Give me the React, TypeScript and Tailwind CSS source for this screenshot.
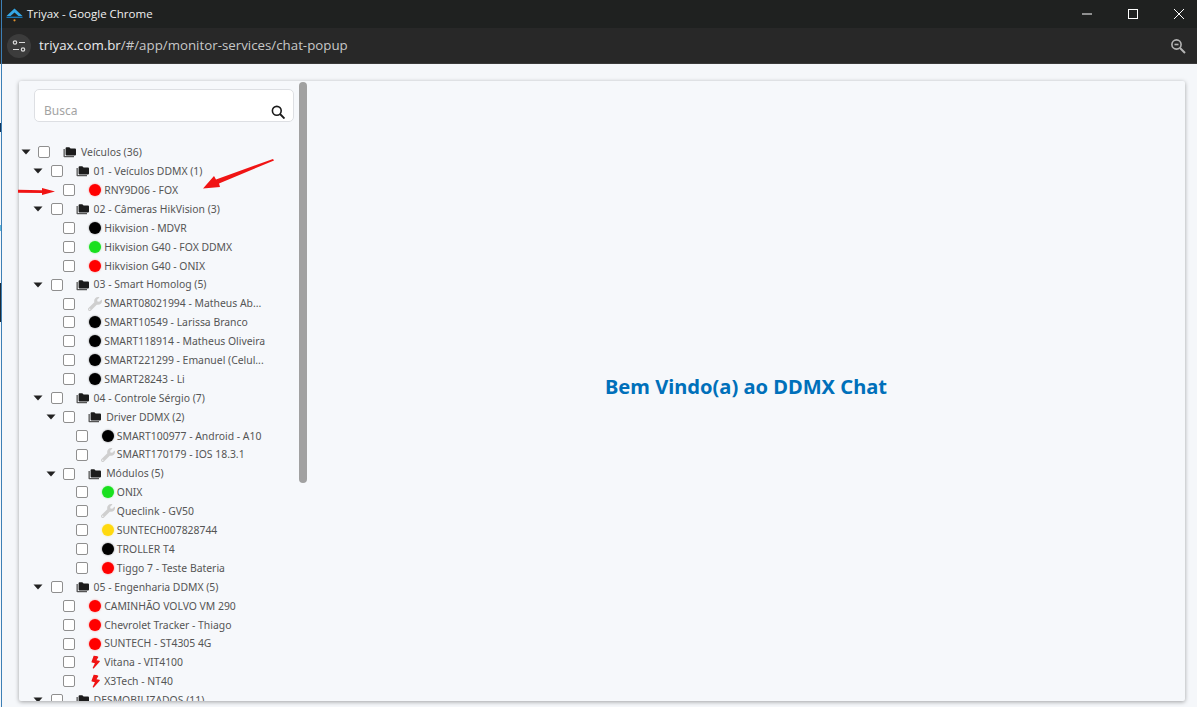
import React from "react";
import { FaBolt, FaWrench } from "react-icons/fa";

type Row = { l: 0 | 1 | 2 | 3; t: string; k: "folder" | "red" | "black" | "green" | "yellow" | "wrench" | "bolt" };

const rows: Row[] = [
  { l: 0, t: "Veículos (36)", k: "folder" },
  { l: 1, t: "01 - Veículos DDMX (1)", k: "folder" },
  { l: 2, t: "RNY9D06 - FOX", k: "red" },
  { l: 1, t: "02 - Câmeras HikVision (3)", k: "folder" },
  { l: 2, t: "Hikvision - MDVR", k: "black" },
  { l: 2, t: "Hikvision G40 - FOX DDMX", k: "green" },
  { l: 2, t: "Hikvision G40 - ONIX", k: "red" },
  { l: 1, t: "03 - Smart Homolog (5)", k: "folder" },
  { l: 2, t: "SMART08021994 - Matheus Ab...", k: "wrench" },
  { l: 2, t: "SMART10549 - Larissa Branco", k: "black" },
  { l: 2, t: "SMART118914 - Matheus Oliveira", k: "black" },
  { l: 2, t: "SMART221299 - Emanuel (Celul...", k: "black" },
  { l: 2, t: "SMART28243 - Li", k: "black" },
  { l: 1, t: "04 - Controle Sérgio (7)", k: "folder" },
  { l: 2, t: "Driver DDMX (2)", k: "folder" },
  { l: 3, t: "SMART100977 - Android - A10", k: "black" },
  { l: 3, t: "SMART170179 - IOS 18.3.1", k: "wrench" },
  { l: 2, t: "Módulos (5)", k: "folder" },
  { l: 3, t: "ONIX", k: "green" },
  { l: 3, t: "Queclink - GV50", k: "wrench" },
  { l: 3, t: "SUNTECH007828744", k: "yellow" },
  { l: 3, t: "TROLLER T4", k: "black" },
  { l: 3, t: "Tiggo 7 - Teste Bateria", k: "red" },
  { l: 1, t: "05 - Engenharia DDMX (5)", k: "folder" },
  { l: 2, t: "CAMINHÃO VOLVO VM 290", k: "red" },
  { l: 2, t: "Chevrolet Tracker - Thiago", k: "red" },
  { l: 2, t: "SUNTECH - ST4305 4G", k: "red" },
  { l: 2, t: "Vitana - VIT4100", k: "bolt" },
  { l: 2, t: "X3Tech - NT40", k: "bolt" },
  { l: 1, t: "DESMOBILIZADOS (11)", k: "folder" },
];

const indent = ["pl-0", "pl-[12.6px]", "pl-[25.2px]", "pl-[37.8px]"];

function Folder() {
  return (
    <svg width="14" height="12" viewBox="0 0 14 12" className="shrink-0">
      <path d="M0.5 3v7.4c0 .5.4.8.8.8H11v-1.2H1.8V3z" fill="#555" />
      <path d="M2.6 2.2c0-.5.4-.9.9-.9h2.8l1.3 1.3h4.5c.5 0 .9.4.9.9v5c0 .5-.4.9-.9.9H3.5c-.5 0-.9-.4-.9-.9z" fill="#1c1c1c" />
    </svg>
  );
}

function Icon({ k }: { k: Row["k"] }) {
  if (k === "folder") return <Folder />;
  if (k === "wrench")
    return <FaWrench className="w-[14px] h-[14px] shrink-0 text-[#cfcfcf]" />;
  if (k === "bolt")
    return (
      <span className="w-[14px] flex justify-center shrink-0">
        <FaBolt className="w-[11px] h-[13px] text-[#f01414] rotate-12" />
      </span>
    );
  const c = {
    red: "bg-[#ff0000] shadow-[#ff0000]/30",
    black: "bg-[#000000] shadow-[#000000]/30",
    green: "bg-[#19e01e] shadow-[#19e01e]/30",
    yellow: "bg-[#ffd90f] shadow-[#ffd90f]/30",
  }[k];
  return <span className={`w-3 h-3 mx-px rounded-full shrink-0 shadow-[0_0_1.5px_0.5px] ${c}`} />;
}

function TreeRow({ r }: { r: Row }) {
  const isFolder = r.k === "folder";
  return (
    <div className={`flex items-center h-[18.9px] whitespace-nowrap ${indent[r.l]}`}>
      <span className="w-[13px] mr-[6px] shrink-0 flex justify-center">
        {isFolder && (
          <svg width="10" height="6" viewBox="0 0 10 6">
            <path d="M0.5 0.5h9L5 5.5z" fill="#222" />
          </svg>
        )}
      </span>
      <span className="w-[12px] h-[12px] mr-[13px] shrink-0 rounded-[2px] border border-[#8f8f8f] bg-white" />
      <Icon k={r.k} />
      <span className={`${isFolder ? "ml-[4px]" : "ml-[2px]"} text-[10.4px] leading-none text-[#555555]`}>{r.t}</span>
    </div>
  );
}

export default function App() {
  return (
    <div className="w-[1197px] h-[707px] overflow-hidden flex flex-col bg-[#f5f7fa] font-['Noto_Sans',sans-serif] relative">
      {/* title bar */}
      <div className="h-[28px] bg-[#1f2120] flex items-center shrink-0">
        <svg width="17" height="14" viewBox="0 0 17 14" className="ml-[6px] mt-[1px]">
          <path d="M8.5 0.5 L16.5 8 H12.5 L8.5 4.5 L4.5 8 H0.5 Z" fill="#35a7e6" />
          <path d="M0.5 8.6h16v1.4H0.5z" fill="#1a78b5" />
          <circle cx="8.5" cy="12.3" r="1.1" fill="#e0912f" />
        </svg>
        <span className="ml-[4px] text-[11.5px] text-[#f0f0f0] font-['Open_Sans',sans-serif]">Triyax - Google Chrome</span>
        <div className="ml-auto flex items-center gap-[36px] mr-[13px]">
          <svg width="10" height="2" viewBox="0 0 10 2" className="-mt-[1px]"><path d="M0 1h10" stroke="#fff" strokeWidth="1" /></svg>
          <svg width="10" height="10" viewBox="0 0 10 10"><rect x="0.5" y="0.5" width="9" height="9" fill="none" stroke="#fff" strokeWidth="1" /></svg>
          <svg width="10" height="10" viewBox="0 0 10 10"><path d="M0 0l10 10M10 0L0 10" stroke="#fff" strokeWidth="1" /></svg>
        </div>
      </div>
      {/* address bar */}
      <div className="h-[36px] bg-[#282828] border-b border-[#3a3a3a] flex items-center shrink-0">
        <span className="ml-[7px] w-[24px] h-[24px] rounded-full bg-[#3c3c3c] flex items-center justify-center">
          <svg width="14" height="12" viewBox="0 0 14 12" fill="none" stroke="#dcdcdc" strokeWidth="1.2">
            <circle cx="3" cy="2.5" r="1.7" />
            <path d="M7 2.5h6M1 9.5h6" />
            <circle cx="11" cy="9.5" r="1.7" />
          </svg>
        </span>
        <span className="ml-[8px] text-[13.3px] text-[#c7c7c7] font-['Open_Sans',sans-serif]">
          <span className="text-[#e8eaed]">triyax.com.br</span>/#/app/monitor-services/chat-popup
        </span>
        <svg width="16" height="16" viewBox="0 0 16 16" fill="none" stroke="#b5b5b5" strokeWidth="1.6" className="ml-auto mr-[11px]">
          <circle cx="6.5" cy="6.5" r="4.6" />
          <path d="M10 10l5 5" strokeWidth="2" />
          <path d="M4.5 6.5h4" />
        </svg>
      </div>
      {/* page */}
      <div className="flex-1 min-h-0 pt-[17px] pb-[6px] pl-[19px] pr-[12px]">
        <div className="h-full flex bg-[#f6f8fb] rounded-[2px] shadow-[0_1px_4px_rgba(0,0,0,0.35)] overflow-hidden">
          {/* sidebar */}
          <div className="w-[280px] shrink-0 min-w-0 overflow-hidden">
            <div className="ml-[15px] mt-[8px] h-[33px] w-[260px] bg-white border border-[#dddfe3] rounded-[5px] flex items-center justify-between pl-[9px] pr-[8px]">
              <span className="text-[12px] text-[#a3a3a3] mt-[10px]">Busca</span>
              <svg width="14" height="14" viewBox="0 0 14 14" fill="none" stroke="#1a1a1a" strokeWidth="1.6" className="mt-[13px]">
                <circle cx="5.8" cy="5.8" r="4.4" />
                <path d="M9 9l4.5 4.5" strokeWidth="1.9" />
              </svg>
            </div>
            <div className="mt-[21px]">
              {rows.map((r) => (
                <TreeRow key={r.t} r={r} />
              ))}
            </div>
          </div>
          <div className="w-[8px] shrink-0 self-start mt-px h-[401px] bg-[#a1a1a1] rounded-[4px]" />
          {/* main */}
          <div className="flex-1 flex items-center justify-center">
            <h1 className="text-[20.1px] font-bold text-[#0070ba] -mt-[8px]">Bem Vindo(a) ao DDMX Chat</h1>
          </div>
        </div>
      </div>
      {/* window edge showing behind the popup */}
      <div className="absolute left-[1px] top-0 bottom-0 w-px bg-[#3d7fb5]" />
      <div className="absolute left-0 top-[123px] w-px h-[9px] bg-[#12355a]" />
      <div className="absolute left-0 top-[225px] w-px h-[6px] bg-[#5fb6dc]" />
      <div className="absolute left-0 top-[283px] w-px h-[39px] bg-[#1c2a36]" />
      {/* annotation arrows */}
      <svg width="290" height="50" viewBox="0 0 290 50" className="absolute left-0 top-[150px] pointer-events-none">
        <path d="M18 39.8L42 40.2V38L55 41.5L42 45V43L18 42.8z" fill="#f01414" />
        <path d="M274 10.5L219 33.5L220 37L203 38.5L214 26L216 29.5L273 9z" fill="#f01414" />
      </svg>
    </div>
  );
}
